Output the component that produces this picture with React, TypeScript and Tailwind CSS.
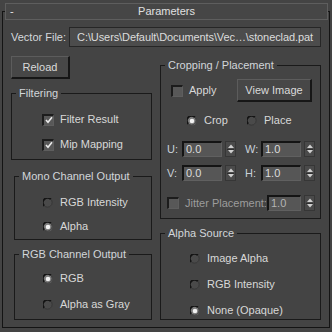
import type { ReactNode } from 'react';

function Group({ title, className, children }: { title: string; className: string; children: ReactNode }) {
  return (
    <div className={`relative border border-[#1a1a1a] ${className}`}>
      <span className="absolute -top-[8px] left-[4px] bg-[#444444] px-[3px] leading-[14px] text-[#d2d6da]">{title}</span>
      {children}
    </div>
  );
}

function Check({ checked }: { checked?: boolean }) {
  return (
    <span className="flex h-[12px] w-[12px] shrink-0 items-center justify-center border-t-2 border-l-2 border-r border-b border-t-[#1c1c1c] border-l-[#1c1c1c] border-r-[#5e5e5e] border-b-[#5e5e5e] bg-[#585858]">
      {checked && (
        <svg width="8" height="8" viewBox="0 0 8 8">
          <path d="M1 4l2 2.2L7 1.2" fill="none" stroke="#ececec" strokeWidth="1.6" />
        </svg>
      )}
    </span>
  );
}

function Radio({ on }: { on?: boolean }) {
  return (
    <svg width="10" height="10" viewBox="0 0 10 10" className="shrink-0">
      <circle cx="5" cy="5" r="4.5" fill={on ? '#7a7a7a' : '#4a4a4a'} />
      <path d="M1.3 7.8A4.3 4.3 0 0 1 7.8 1.3" fill="none" stroke="#141414" strokeWidth="1.8" />
      <path d="M7.8 1.3A4.3 4.3 0 0 1 1.3 7.8" fill="none" stroke="#363636" strokeWidth="1" />
      {on && <circle cx="5" cy="5" r="2.3" fill="#f2f2f2" />}
    </svg>
  );
}

function Arrows() {
  return (
    <span className="ml-[3px] flex h-[16px] w-[11px] flex-col items-center justify-between border border-[#363636] bg-[#4a4a4a] py-[2px]">
      <svg width="6" height="4" viewBox="0 0 6 4">
        <path d="M0 4L3 0.5L6 4Z" fill="#cfcfcf" />
      </svg>
      <span className="h-px w-[7px] bg-[#2e2e2e]" />
      <svg width="6" height="4" viewBox="0 0 6 4">
        <path d="M0 0L3 3.5L6 0Z" fill="#cfcfcf" />
      </svg>
    </span>
  );
}

function Field({ value, w, dim }: { value: string; w: string; dim?: boolean }) {
  return (
    <span
      className={`flex h-[16px] ${w} items-center border-t-2 border-l-2 border-r border-b border-t-[#141414] border-l-[#141414] border-r-[#606060] border-b-[#606060] bg-[#565656] pl-[2px] ${dim ? 'text-[#b4b4b4]' : 'text-[#dcdcdc]'}`}
    >
      {value}
    </span>
  );
}

function Btn({ label, className }: { label: string; className: string }) {
  return (
    <button className={`flex items-center justify-center border-t border-l border-r-2 border-b-2 border-t-[#5c5c5c] border-l-[#5c5c5c] border-r-[#161616] border-b-[#161616] bg-[#474747] text-[#dadada] ${className}`}>
      {label}
    </button>
  );
}

export default function App() {
  return (
    <div className="h-[332px] w-[332px] bg-[#444444] pt-[11px] pl-[2px] font-['Liberation_Sans',Arial,sans-serif] text-[11px] leading-[13px] text-[#d8d8d8]">
      <div className="h-[317px] w-[328px] border border-[#141414]">
        {/* rollout title bar */}
        <div className="relative -mt-[9px] ml-[2px] flex h-[17px] w-[323px] items-center border border-[#5e5e5e] bg-[#464646]">
          <span className="absolute left-[4px] text-[#e6e6e6]">-</span>
          <span className="w-full text-center text-[#e0e0e0]">Parameters</span>
        </div>

        <div className="mt-[7px] flex items-center pl-[8px]">
          <span className="w-[58px] text-[#d4d8dc]">Vector File:</span>
          <span className="flex h-[20px] w-[252px] items-center justify-center border border-[#262626] bg-[#4c4c4c] tracking-[-0.1px] text-[#dcdcdc]">
            C:\Users\Default\Documents\Vec…\stoneclad.pat
          </span>
        </div>

        <div className="mt-[9px] flex pl-[8px]">
          {/* left column */}
          <div className="flex w-[141px] flex-col">
            <Btn label="Reload" className="h-[23px] w-[59px]" />

            <Group title="Filtering" className="mt-[14px] h-[67px] w-[141px]">
              <div className="flex flex-col gap-[12px] pt-[19px] pl-[30px]">
                <div className="flex items-center gap-[6px]">
                  <Check checked />
                  <span>Filter Result</span>
                </div>
                <div className="flex items-center gap-[6px]">
                  <Check checked />
                  <span>Mip Mapping</span>
                </div>
              </div>
            </Group>

            <Group title="Mono Channel Output" className="mt-[16px] ml-[3px] h-[64px] w-[138px]">
              <div className="flex flex-col gap-[11px] pt-[19px] pl-[28px]">
                <div className="flex items-center gap-[7px]">
                  <Radio />
                  <span>RGB Intensity</span>
                </div>
                <div className="flex items-center gap-[7px]">
                  <Radio on />
                  <span>Alpha</span>
                </div>
              </div>
            </Group>

            <Group title="RGB Channel Output" className="mt-[14px] ml-[3px] h-[66px] w-[138px]">
              <div className="flex flex-col gap-[13px] pt-[17px] pl-[28px]">
                <div className="flex items-center gap-[7px]">
                  <Radio on />
                  <span>RGB</span>
                </div>
                <div className="flex items-center gap-[7px]">
                  <Radio />
                  <span>Alpha as Gray</span>
                </div>
              </div>
            </Group>
          </div>

          {/* right column */}
          <div className="ml-[8px] flex w-[161px] flex-col">
            <Group title="Cropping / Placement" className="mt-[9px] h-[154px] w-[161px]">
              <div className="mt-[13px] flex h-[23px] items-center pr-[8px] pl-[10px]">
                <Check />
                <span className="ml-[6px]">Apply</span>
                <Btn label="View Image" className="ml-auto h-[23px] w-[75px]" />
              </div>

              <div className="mt-[12px] flex items-center pl-[26px]">
                <div className="flex w-[60px] items-center gap-[7px]">
                  <Radio on />
                  <span>Crop</span>
                </div>
                <div className="flex items-center gap-[7px]">
                  <Radio />
                  <span>Place</span>
                </div>
              </div>

              <div className="mt-[14px] flex items-center pl-[6px]">
                <span className="w-[15px] text-[#c8d0d8]">U:</span>
                <Field value="0.0" w="w-[40px]" />
                <Arrows />
                <span className="ml-[9px] w-[16px] text-[#c8d0d8]">W:</span>
                <Field value="1.0" w="w-[40px]" />
                <Arrows />
              </div>

              <div className="mt-[8px] flex items-center pl-[6px]">
                <span className="w-[15px] text-[#c8d0d8]">V:</span>
                <Field value="0.0" w="w-[40px]" />
                <Arrows />
                <span className="ml-[9px] w-[16px] text-[#c8d0d8]">H:</span>
                <Field value="1.0" w="w-[40px]" />
                <Arrows />
              </div>

              <div className="mt-[14px] flex items-center pl-[6px]">
                <div className="flex w-[100px] items-center">
                  <Check />
                  <span className="ml-[6px] text-[#9c9c9c]">Jitter Placement:</span>
                </div>
                <Field value="1.0" w="w-[34px]" dim />
                <Arrows />
              </div>
            </Group>

            <Group title="Alpha Source" className="mt-[14px] h-[87px] w-[161px]">
              <div className="flex flex-col gap-[13px] pt-[18px] pl-[29px]">
                <div className="flex items-center gap-[7px]">
                  <Radio />
                  <span>Image Alpha</span>
                </div>
                <div className="flex items-center gap-[7px]">
                  <Radio />
                  <span>RGB Intensity</span>
                </div>
                <div className="flex items-center gap-[7px]">
                  <Radio on />
                  <span>None (Opaque)</span>
                </div>
              </div>
            </Group>
          </div>
        </div>
      </div>
    </div>
  );
}
